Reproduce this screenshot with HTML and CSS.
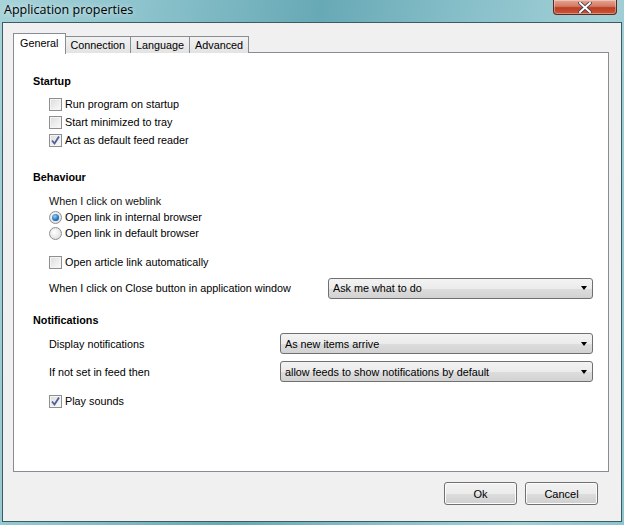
FILE: index.html
```html
<!DOCTYPE html>
<html>
<head>
<meta charset="utf-8">
<link rel="stylesheet" href="styles.css">
</head>
<body>
<div class="window">
  <div class="titlebar">
    <span class="title">Application properties</span>
    <div class="close"><svg width="14" height="11" viewBox="0 0 14 11"><path d="M2 1 L12 10 M12 1 L2 10" stroke="#3a3a4a" stroke-width="3.6" stroke-linecap="square"/><path d="M2 1 L12 10 M12 1 L2 10" stroke="#fff" stroke-width="2" stroke-linecap="square"/></svg></div>
  </div>
  <div class="client">
    <div class="tabs">
      <div class="tab active">General</div>
      <div class="tab">Connection</div>
      <div class="tab">Language</div>
      <div class="tab">Advanced</div>
    </div>
    <div class="panel">
      <div class="heading">Startup</div>
      <div class="group">
        <label class="check"><span class="cb"></span>Run program on startup</label>
        <label class="check"><span class="cb"></span>Start minimized to tray</label>
        <label class="check"><span class="cb checked"><svg width="11" height="11" viewBox="0 0 11 11"><path d="M2 5.5 L4.5 8.5 L9 1.5" fill="none" stroke="#4d5f99" stroke-width="1.8"/></svg></span>Act as default feed reader</label>
      </div>
      <div class="heading h-behaviour">Behaviour</div>
      <div class="group">
        <div class="text-row">When I click on weblink</div>
        <label class="radio-row"><span class="rb selected"><span class="dot"></span></span>Open link in internal browser</label>
        <label class="radio-row"><span class="rb"></span>Open link in default browser</label>
        <label class="check gap-top"><span class="cb"></span>Open article link automatically</label>
        <div class="field-row close-row">
          <span>When I click on Close button in application window</span>
          <div class="select w-close"><span>Ask me what to do</span><span class="arrow"></span></div>
        </div>
      </div>
      <div class="heading h-notif">Notifications</div>
      <div class="group">
        <div class="field-row r1">
          <span>Display notifications</span>
          <div class="select w-notif"><span>As new items arrive</span><span class="arrow"></span></div>
        </div>
        <div class="field-row r2">
          <span>If not set in feed then</span>
          <div class="select w-notif"><span>allow feeds to show notifications by default</span><span class="arrow"></span></div>
        </div>
        <label class="check play"><span class="cb checked"><svg width="11" height="11" viewBox="0 0 11 11"><path d="M2 5.5 L4.5 8.5 L9 1.5" fill="none" stroke="#4d5f99" stroke-width="1.8"/></svg></span>Play sounds</label>
      </div>
    </div>
    <div class="buttons">
      <button class="btn">Ok</button>
      <button class="btn">Cancel</button>
    </div>
  </div>
</div>
</body>
</html>
```

FILE: styles.css
```css
* { box-sizing: border-box; }
html, body { margin: 0; padding: 0; }
body {
  width: 624px;
  height: 525px;
  overflow: hidden;
  font-family: "Liberation Sans", Arial, sans-serif;
  font-size: 10.8px;
  color: #000;
}
.window {
  width: 624px;
  height: 525px;
  display: flex;
  flex-direction: column;
  padding: 0 2px 3px 2px;
  background: linear-gradient(100deg, #a7d3da 0%, #8cc3cc 20%, #67a9b5 45%, #87bfc9 65%, #a2d0d7 85%, #8cc5ce 100%);
  position: relative;
}
.titlebar {
  height: 22px;
  flex: none;
  display: flex;
  align-items: center;
  justify-content: space-between;
  position: relative;
}
.title {
  font-family: "Open Sans", "Liberation Sans", sans-serif;
  font-size: 12.5px;
  color: #000;
  padding-left: 2px;
  margin-top: -4px;
  text-shadow: 0 0 6px rgba(255,255,255,0.8);
}
.close {
  position: absolute;
  right: 5px;
  top: 0;
  width: 64px;
  height: 15px;
  border: 1px solid #5a2a20;
  border-top: none;
  border-radius: 0 0 4px 4px;
  background: linear-gradient(#e5a595 0%, #d47a63 45%, #bd3e22 55%, #c9553a 100%);
  display: flex;
  align-items: center;
  justify-content: center;
  box-shadow: inset 0 0 0 1px rgba(255,255,255,0.35);
}
.client {
  flex: 1;
  background: #f0f0f0;
  border: 1px solid #3d5c62;
  padding: 10px 12px 0 10px;
  display: flex;
  flex-direction: column;
  position: relative;
}
.tabs {
  display: flex;
  align-items: flex-end;
  height: 20px;
  position: relative;
  z-index: 2;
  margin-bottom: -1px;
}
.tab {
  height: 17px;
  padding: 0 5px;
  border: 1px solid #898c95;
  border-bottom: none;
  margin-left: -1px;
  background: linear-gradient(#f2f2f2, #e3e3e3);
  display: flex;
  align-items: center;
  color: #000;
}
.tab:first-child { margin-left: 0; }
.tab.active {
  height: 21px;
  background: #fff;
  padding: 0 7px 3px 6px;
  position: relative;
  z-index: 3;
  margin-right: -1px;
  margin-bottom: -1px;
}
.panel {
  height: 420px;
  flex: none;
  background: #fff;
  border: 1px solid #898c95;
  padding: 19px 10px 0 19px;
}
.heading {
  font-weight: bold;
  height: 18px;
  line-height: 18px;
}
.h-behaviour { margin-top: 19px; }
.h-notif { margin-top: 12px; }
.group {
  padding-left: 16px;
  display: flex;
  flex-direction: column;
}
.check, .radio-row {
  display: flex;
  align-items: center;
  height: 18px;
}
.group > .check:first-child { margin-top: 5px; }
.radio-row { height: 16px; }
.cb {
  width: 13px;
  height: 13px;
  border: 1px solid #8f8f8f;
  background: linear-gradient(135deg, #dcdcdc, #fbfbfb);
  box-shadow: inset 0 0 0 1px #f4f4f4;
  margin-right: 3px;
  display: flex;
  align-items: center;
  justify-content: center;
  flex: none;
}
.rb {
  width: 13px;
  height: 13px;
  border: 1px solid #8f8f8f;
  border-radius: 50%;
  background: radial-gradient(circle at 40% 40%, #fff, #d4d4d4);
  margin-right: 3px;
  display: flex;
  align-items: center;
  justify-content: center;
  flex: none;
}
.rb .dot {
  width: 7px;
  height: 7px;
  border-radius: 50%;
  background: radial-gradient(circle at 40% 35%, #8fd0ff, #1d6fb8 60%, #0b3f78);
}
.text-row {
  height: 16px;
  line-height: 16px;
  margin-top: 7px;
  color: #101010;
}
.gap-top { margin-top: 12px; }
.field-row {
  display: flex;
  align-items: center;
  justify-content: space-between;
  padding-right: 5px;
}
.close-row { margin-top: 6px; height: 22px; }
.r1 { margin-top: 4px; height: 21px; }
.r2 { margin-top: 7px; height: 21px; }
.play { margin-top: 10px; }
.select {
  height: 21px;
  border: 1px solid #707070;
  border-radius: 3px;
  background: linear-gradient(#f3f3f3 0%, #ebebeb 50%, #dddddd 51%, #d2d2d2 100%);
  display: flex;
  align-items: center;
  justify-content: space-between;
  padding: 0 5px 0 4px;
}
.w-close { width: 265px; }
.w-notif { width: 313px; }
.arrow {
  width: 0;
  height: 0;
  border-left: 3.5px solid transparent;
  border-right: 3.5px solid transparent;
  border-top: 4px solid #000;
}
.buttons {
  display: flex;
  justify-content: flex-end;
  gap: 8px;
  margin-top: 10px;
  padding-right: 11px;
}
.btn {
  width: 73px;
  height: 23px;
  border: 1px solid #707070;
  border-radius: 3px;
  background: linear-gradient(#f2f2f2 0%, #ebebeb 50%, #dddddd 51%, #cfcfcf 100%);
  box-shadow: inset 0 0 0 1px #fcfcfc;
  font-family: inherit;
  font-size: 11px;
  color: #000;
  padding: 0;
}
```
